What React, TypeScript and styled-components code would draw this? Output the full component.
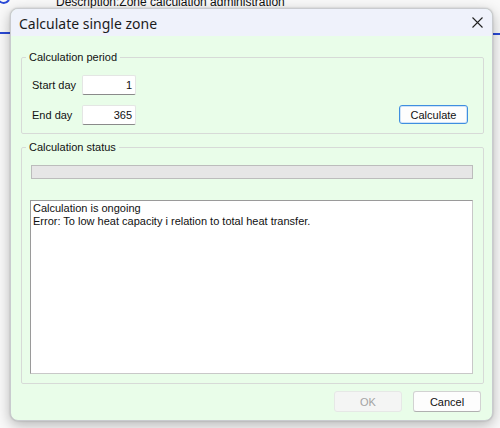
import React from "react";
import styled, { createGlobalStyle } from "styled-components";

const Global = createGlobalStyle`
  html, body { margin: 0; padding: 0; }
  body { background: #f7f7f7; font-family: "Liberation Sans", Arial, sans-serif; }
`;

const Desktop = styled.div`
  position: relative;
  width: 500px;
  height: 428px;
  overflow: hidden;
  background: #f9f9f9;
`;

const BehindTitle = styled.div`
  position: absolute;
  left: 56px;
  top: -5px;
  font-family: "Liberation Sans", Arial, sans-serif;
  font-size: 12px;
  color: #111;
  white-space: nowrap;
`;

const BlueRule = styled.div<{ $left: number; $top: number; $width: number }>`
  position: absolute;
  left: ${(p) => p.$left}px;
  top: ${(p) => p.$top}px;
  width: ${(p) => p.$width}px;
  height: 2px;
  background: #2a49d6;
`;

const Logo = styled.svg`
  position: absolute;
  left: 0;
  top: -6px;
`;

const Dialog = styled.div`
  position: absolute;
  left: 10px;
  top: 8px;
  width: 483px;
  height: 413px;
  border-radius: 8px;
  overflow: hidden;
  display: flex;
  flex-direction: column;
  background: #e9fde9;
  border: 1px solid #c9cbcf;
  box-sizing: border-box;
  box-shadow: 0 4px 14px rgba(0, 0, 0, 0.28), 0 0 2px rgba(0, 0, 0, 0.2);
`;

const TitleBar = styled.div`
  height: 27px;
  flex: 0 0 auto;
  background: #eff2fb;
  display: flex;
  align-items: center;
  justify-content: space-between;
  padding: 0 9px 0 8px;
`;

const TitleText = styled.div`
  font-family: "Noto Sans", "Liberation Sans", sans-serif;
  font-size: 14px;
  color: #1b1b1b;
  padding-top: 1px;
`;

const CloseIcon = styled.svg`
  display: block;
`;

const Body = styled.div`
  flex: 1;
  display: flex;
  flex-direction: column;
  padding: 15px 8px 8px 10px;
  font-size: 11px;
  color: #111;
`;

const Group = styled.fieldset`
  margin: 0;
  border: 1px solid #d7dad7;
  border-radius: 2px;
  min-width: 0;
  padding: 0;
`;

const Legend = styled.legend`
  margin-left: 4px;
  padding: 0 3px;
  font-size: 11px;
  line-height: 13px;
  color: #111;
`;

const PeriodGrid = styled.div`
  display: grid;
  grid-template-columns: 50px 54px 1fr auto;
  grid-template-rows: 20px 20px;
  row-gap: 10px;
  align-items: center;
  padding: 11px 15px 8px 10px;
`;

const Label = styled.div`
  font-size: 11px;
  grid-column: 1;
`;

const NumberField = styled.div`
  height: 20px;
  box-sizing: border-box;
  background: #fff;
  border: 1px solid #e4e6e4;
  border-bottom: 1px solid #8a8a8a;
  border-radius: 2px;
  text-align: right;
  padding: 2px 3px 0 0;
  font-size: 11px;
  line-height: 15px;
  grid-column: 2;
`;

const Button = styled.button<{ $primary?: boolean; $disabled?: boolean }>`
  width: ${(p) => (p.$primary ? 69 : 68)}px;
  height: ${(p) => (p.$primary ? 19 : 21)}px;
  box-sizing: border-box;
  border-radius: 3px;
  font-family: "Liberation Sans", Arial, sans-serif;
  font-size: 11px;
  padding: 0;
  background: ${(p) => (p.$disabled ? "#f4f5f4" : "#fdfdfd")};
  color: ${(p) => (p.$disabled ? "#a3a3a3" : "#111")};
  border: ${(p) =>
    p.$primary
      ? "1px solid #3f8ee0"
      : p.$disabled
      ? "1px solid #e6e8e6"
      : "1px solid #d2d2d2"};
  border-bottom-color: ${(p) =>
    p.$primary ? "#3f8ee0" : p.$disabled ? "#e6e8e6" : "#b0b0b0"};
  box-shadow: ${(p) => (p.$primary ? "inset 0 0 0 1px #cfe3f7" : "none")};
`;

const CalcCell = styled.div`
  grid-column: 4;
  grid-row: 2;
  align-self: start;
`;

const StatusGroup = styled(Group)`
  margin-top: 7px;
  flex: 1;
  display: flex;
  flex-direction: column;
`;

const StatusInner = styled.div`
  flex: 1;
  display: flex;
  flex-direction: column;
  padding: 11px 10px 9px 8px;
`;

const Progress = styled.div`
  height: 14px;
  margin-left: 1px;
  box-sizing: border-box;
  background: #e6e6e6;
  border: 1px solid #bcbcbc;
`;

const Log = styled.div`
  margin-top: 21px;
  flex: 1;
  background: #fff;
  border: 1px solid #9a9a9a;
  border-right-color: #c8c8c8;
  border-bottom-color: #c8c8c8;
  padding: 1px 2px;
  font-size: 11px;
  line-height: 13px;
  white-space: pre-line;
`;

const Footer = styled.div`
  display: flex;
  justify-content: flex-end;
  gap: 11px;
  padding: 7px 3px 0 0;
`;

export default function App() {
  return (
    <>
      <Global />
      <Desktop>
        <Logo width="12" height="12" viewBox="0 0 12 12">
          <path d="M-2 6 Q4 12 9 6" fill="none" stroke="#2a49d6" strokeWidth="2" />
        </Logo>
        <BehindTitle>Description:Zone calculation administration</BehindTitle>
        <BlueRule $left={0} $top={32} $width={10} />
        <BlueRule $left={493} $top={33} $width={7} />
        <Dialog>
          <TitleBar>
            <TitleText>Calculate single zone</TitleText>
            <CloseIcon width="11" height="11" viewBox="0 0 11 11">
              <path d="M0.5 0.5 L10.5 10.5 M10.5 0.5 L0.5 10.5" stroke="#222" strokeWidth="1.1" />
            </CloseIcon>
          </TitleBar>
          <Body>
            <Group>
              <Legend>Calculation period</Legend>
              <PeriodGrid>
                <Label>Start day</Label>
                <NumberField>1</NumberField>
                <Label>End day</Label>
                <NumberField>365</NumberField>
                <CalcCell>
                  <Button $primary>Calculate</Button>
                </CalcCell>
              </PeriodGrid>
            </Group>
            <StatusGroup>
              <Legend>Calculation status</Legend>
              <StatusInner>
                <Progress />
                <Log>
                  {"Calculation is ongoing\nError: To low heat capacity i relation to total heat transfer."}
                </Log>
              </StatusInner>
            </StatusGroup>
            <Footer>
              <Button $disabled>OK</Button>
              <Button>Cancel</Button>
            </Footer>
          </Body>
        </Dialog>
      </Desktop>
    </>
  );
}
